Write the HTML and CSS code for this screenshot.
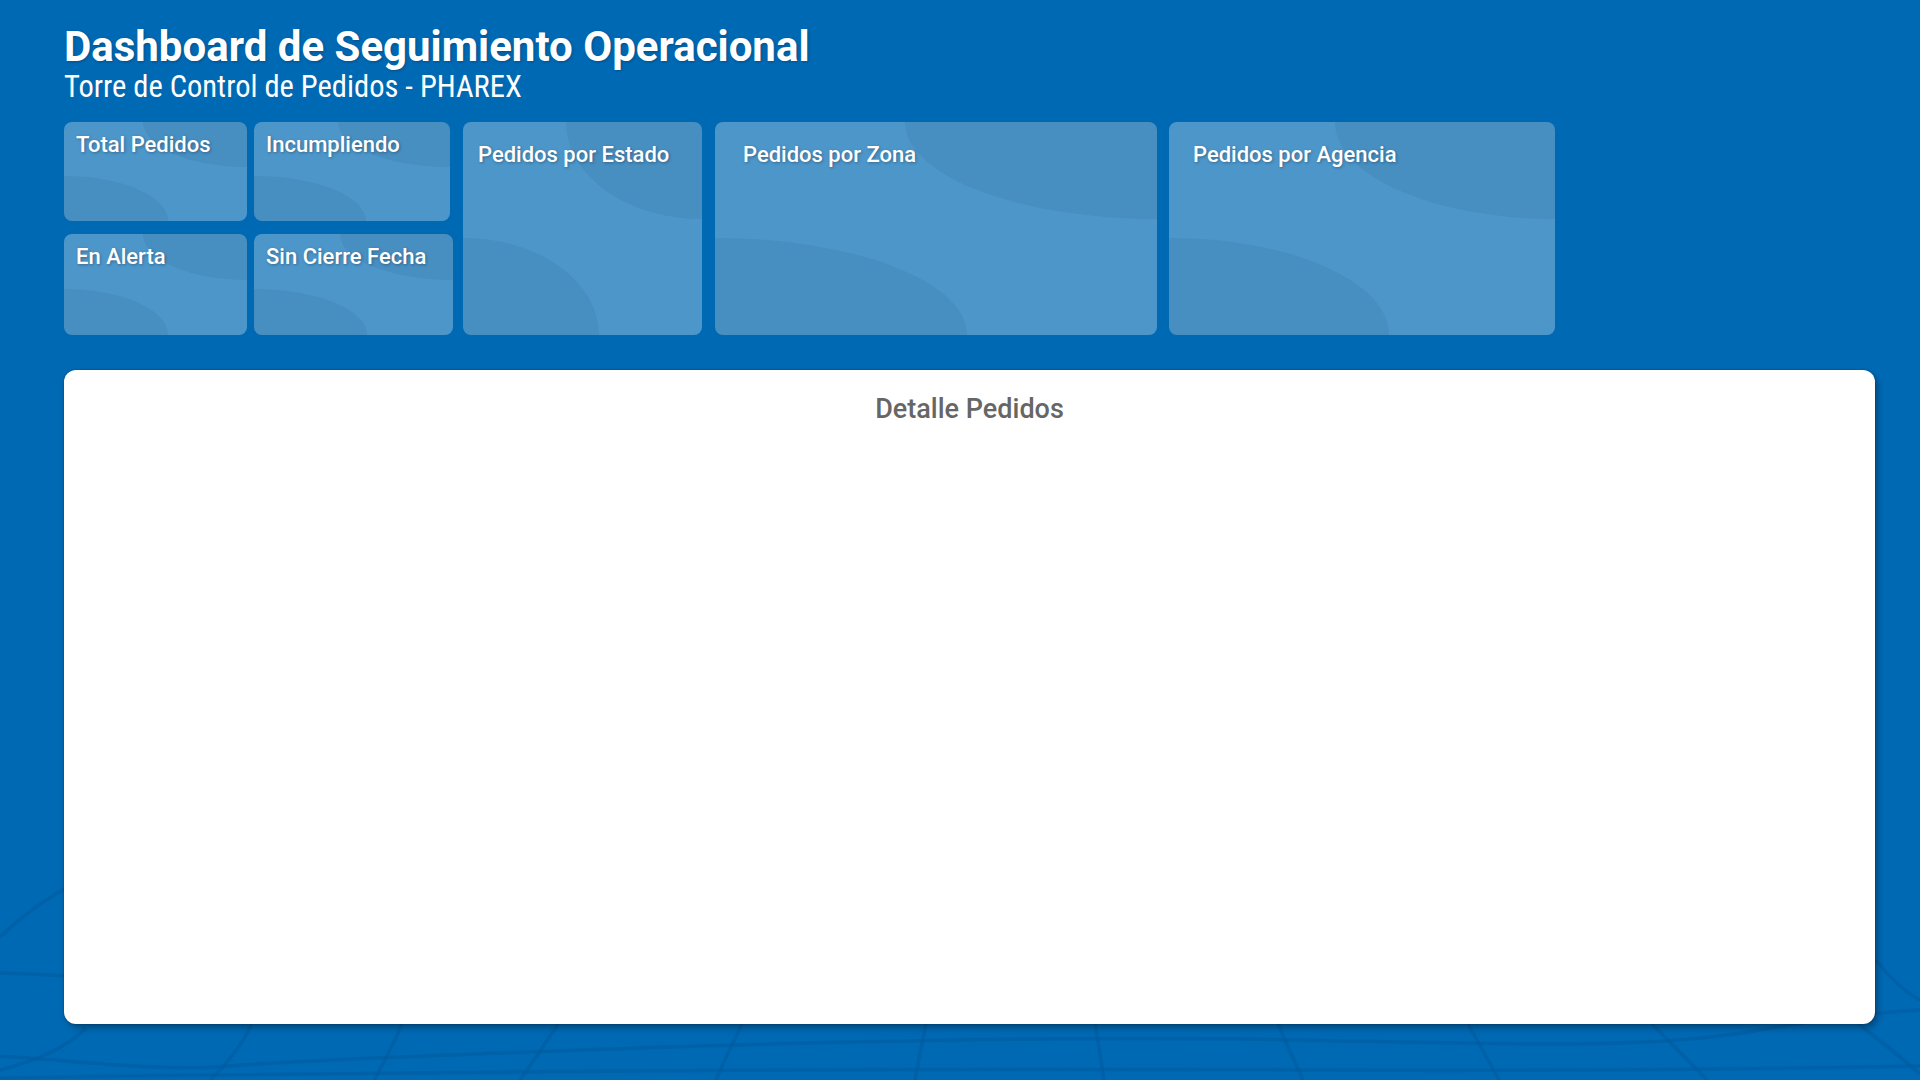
FILE: index.html
```html
<!DOCTYPE html>
<html lang="es">
<head>
<meta charset="utf-8">
<title>Dashboard de Seguimiento Operacional</title>
<link rel="stylesheet" href="styles.css">
</head>
<body>
<svg class="bg-grid" viewBox="0 0 1920 1080" preserveAspectRatio="none" aria-hidden="true">
  <g class="grid-lines">
    <path d="M66,888 Q30,908 0,937"/>
    <path d="M0,973 Q30,974 66,976"/>
    <path d="M0,1056 C90,1062 170,1072 230,1066 C300,1060 520,1052 700,1046 C900,1040 1100,1036 1300,1040 C1500,1044 1650,1050 1760,1030 C1830,1018 1880,1012 1920,1010"/>
    <path d="M0,1078 C400,1072 900,1068 1300,1070 C1600,1072 1800,1068 1920,1066"/>
    <path d="M86,1028 Q60,1055 0,1070"/>
    <path d="M252,1024 Q236,1056 210,1080"/>
    <path d="M402,1024 Q390,1052 374,1080"/>
    <path d="M558,1024 Q540,1052 520,1080"/>
    <path d="M742,1024 Q728,1052 716,1080"/>
    <path d="M926,1024 Q920,1052 915,1080"/>
    <path d="M1095,1024 Q1100,1052 1104,1080"/>
    <path d="M1278,1024 Q1290,1052 1303,1080"/>
    <path d="M1468,1024 Q1484,1052 1499,1080"/>
    <path d="M1652,1024 Q1680,1052 1707,1080"/>
    <path d="M1856,1022 Q1890,1048 1920,1074"/>
    <path d="M1876,960 Q1900,990 1920,1000"/>
  </g>
</svg>

<div class="page">
  <header class="header">
    <h1 class="title">Dashboard de Seguimiento Operacional</h1>
    <p class="subtitle">Torre de Control de Pedidos - PHAREX</p>
  </header>

  <section class="cards">
    <div class="kpis">
      <div class="kpi-row kpi-row-top">
        <div class="card kpi kpi-total"><span class="card-title">Total Pedidos</span></div>
        <div class="card kpi kpi-incump"><span class="card-title">Incumpliendo</span></div>
      </div>
      <div class="kpi-row kpi-row-bottom">
        <div class="card kpi kpi-alerta"><span class="card-title">En Alerta</span></div>
        <div class="card kpi kpi-cierre"><span class="card-title">Sin Cierre Fecha</span></div>
      </div>
    </div>
    <div class="card chart chart-estado"><span class="card-title">Pedidos por Estado</span></div>
    <div class="card chart chart-zona"><span class="card-title">Pedidos por Zona</span></div>
    <div class="card chart chart-agencia"><span class="card-title">Pedidos por Agencia</span></div>
  </section>

  <section class="panel">
    <h2 class="panel-title">Detalle Pedidos</h2>
  </section>
</div>
</body>
</html>
```

FILE: styles.css
```css
html, body {
  margin: 0;
  padding: 0;
}

body {
  width: 1920px;
  height: 1080px;
  overflow: hidden;
  background: #0069b4;
  font-family: Roboto, "Noto Sans", "Liberation Sans", sans-serif;
  color: #fff;
  position: relative;
}

.bg-grid {
  position: absolute;
  left: 0;
  top: 0;
  width: 1920px;
  height: 1080px;
  z-index: 0;
}

.grid-lines path {
  fill: none;
  stroke: #005a9c;
  stroke-width: 3.5;
  opacity: 0.5;
}

.page {
  position: relative;
  z-index: 1;
  padding: 25px 45px 0 64px;
}

.header {
  display: flex;
  flex-direction: column;
}

.title {
  margin: 0;
  font-size: 42px;
  line-height: 44px;
  font-weight: 700;
  text-shadow: 1px 1px 3px rgba(0, 0, 0, 0.25);
}

.subtitle {
  margin: 0;
  font-family: "Roboto Condensed", Roboto, sans-serif;
  font-size: 30.5px;
  line-height: 36px;
  font-weight: 400;
}

.cards {
  display: flex;
  align-items: stretch;
  margin-top: 17px;
  height: 213px;
}

.kpis {
  display: flex;
  flex-direction: column;
  gap: 13px;
}

.kpi-row {
  display: flex;
  gap: 7px;
}

.kpi-row-top { height: 99px; }
.kpi-row-bottom { height: 101px; }

.card {
  position: relative;
  overflow: hidden;
  background: rgba(255, 255, 255, 0.3);
  border-radius: 8px;
  box-sizing: border-box;
}

.card::before,
.card::after {
  content: "";
  position: absolute;
  width: 114%;
  height: 91%;
  border-radius: 50%;
  background: rgba(0, 30, 80, 0.065);
}

.card::before {
  right: -57%;
  top: -45.5%;
}

.card::after {
  left: -57%;
  top: 54.5%;
}

.card-title {
  position: relative;
  z-index: 1;
  display: block;
  font-size: 22px;
  line-height: 26px;
  font-weight: 500;
  white-space: nowrap;
  text-shadow: 1px 1px 3px rgba(0, 0, 0, 0.3);
}

.kpi {
  padding: 10px 0 0 12px;
}

.kpi-total, .kpi-alerta { width: 183px; }
.kpi-incump { width: 196px; }
.kpi-cierre { width: 199px; }

.chart {
  padding-top: 20px;
}

.chart-estado {
  width: 239px;
  margin-left: 10px;
  padding-left: 15px;
}

.chart-zona {
  width: 442px;
  margin-left: 13px;
  padding-left: 28px;
}

.chart-agencia {
  width: 386px;
  margin-left: 12px;
  padding-left: 24px;
}

.panel {
  margin-top: 35px;
  height: 654px;
  background: #fff;
  border-radius: 12px;
  box-shadow: 0 0 2px rgba(0, 0, 0, 0.35), 3px 4px 6px rgba(0, 0, 0, 0.3);
  display: flex;
  flex-direction: column;
  align-items: center;
}

.panel-title {
  margin: 24px 0 0 0;
  font-size: 27px;
  line-height: 30px;
  font-weight: 500;
  color: #666;
}
```
